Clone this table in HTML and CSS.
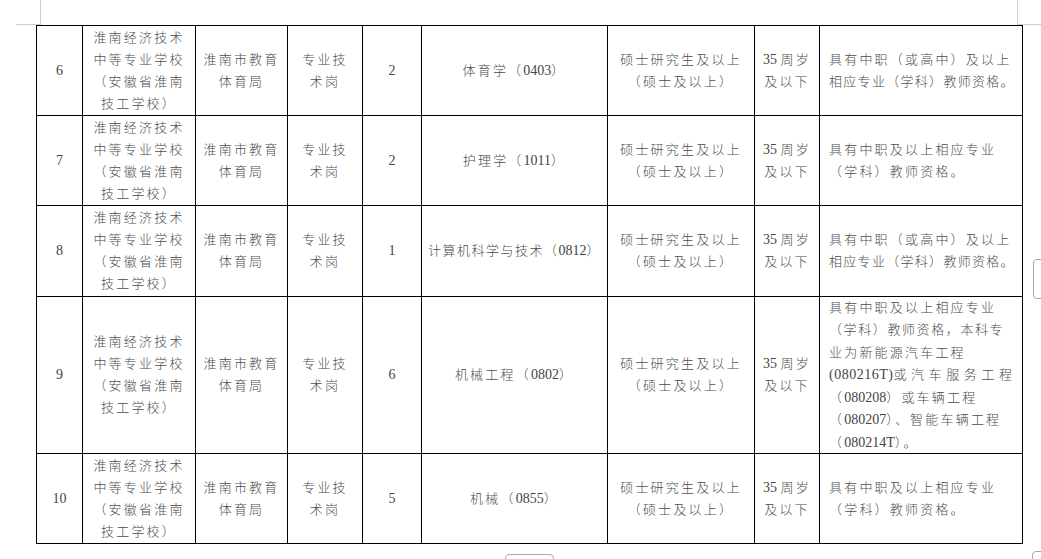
FILE: index.html
```html
<!DOCTYPE html>
<html lang="zh-CN">
<head>
<meta charset="utf-8">
<title>岗位表</title>
<link rel="stylesheet" href="styles.css">
</head>
<body>
<div class="page">
  <span class="mark mark-tl"></span>
  <span class="mark mark-tr"></span>
  <span class="tab tab-right"></span>
  <span class="tab tab-bottom"></span>
  <span class="tab tab-corner"></span>
  <table class="grid">
    <colgroup>
      <col class="w1"><col class="w2"><col class="w3"><col class="w4"><col class="w5">
      <col class="w6"><col class="w7"><col class="w8"><col class="w9">
    </colgroup>
    <tbody>
      <tr class="r90">
        <td><span class="n">6</span></td>
        <td>淮南经济技术<br>中等专业学校<br>（安徽省淮南<br>技工学校）</td>
        <td>淮南市教育<br>体育局</td>
        <td>专业技<br>术岗</td>
        <td><span class="n">2</span></td>
        <td>体育学（<span class="n">0403</span>）</td>
        <td>硕士研究生及以上<br>（硕士及以上）</td>
        <td><span class="n">35 </span>周岁<br>及以下</td>
        <td class="left">具有中职（或高中）及以上<br><span class="snug">相应专业（学科）教师资格。</span></td>
      </tr>
      <tr class="r90">
        <td><span class="n">7</span></td>
        <td>淮南经济技术<br>中等专业学校<br>（安徽省淮南<br>技工学校）</td>
        <td>淮南市教育<br>体育局</td>
        <td>专业技<br>术岗</td>
        <td><span class="n">2</span></td>
        <td>护理学（<span class="n">1011</span>）</td>
        <td>硕士研究生及以上<br>（硕士及以上）</td>
        <td><span class="n">35 </span>周岁<br>及以下</td>
        <td class="left">具有中职及以上相应专业<br>（学科）教师资格。</td>
      </tr>
      <tr class="r91">
        <td><span class="n">8</span></td>
        <td>淮南经济技术<br>中等专业学校<br>（安徽省淮南<br>技工学校）</td>
        <td>淮南市教育<br>体育局</td>
        <td>专业技<br>术岗</td>
        <td><span class="n">1</span></td>
        <td class="tight">计算机科学与技术（<span class="n">0812</span>）</td>
        <td>硕士研究生及以上<br>（硕士及以上）</td>
        <td><span class="n">35 </span>周岁<br>及以下</td>
        <td class="left">具有中职（或高中）及以上<br><span class="snug">相应专业（学科）教师资格。</span></td>
      </tr>
      <tr class="r157">
        <td><span class="n">9</span></td>
        <td>淮南经济技术<br>中等专业学校<br>（安徽省淮南<br>技工学校）</td>
        <td>淮南市教育<br>体育局</td>
        <td>专业技<br>术岗</td>
        <td><span class="n">6</span></td>
        <td>机械工程（<span class="n">0802</span>）</td>
        <td>硕士研究生及以上<br>（硕士及以上）</td>
        <td><span class="n">35 </span>周岁<br>及以下</td>
        <td class="left"><div class="long">具有中职及以上相应专业<br><span class="mid">（学科）教师资格，本科专</span><br>业为新能源汽车工程<br><span class="wide"><span class="n">(080216T)</span>或汽车服务工程</span><br>（<span class="n">080208</span>）或车辆工程<br>（<span class="n">080207</span>）、智能车辆工程<br>（<span class="n">080214T</span>）。</div></td>
      </tr>
      <tr class="r90">
        <td><span class="n">10</span></td>
        <td>淮南经济技术<br>中等专业学校<br>（安徽省淮南<br>技工学校）</td>
        <td>淮南市教育<br>体育局</td>
        <td>专业技<br>术岗</td>
        <td><span class="n">5</span></td>
        <td>机械（<span class="n">0855</span>）</td>
        <td>硕士研究生及以上<br>（硕士及以上）</td>
        <td><span class="n">35 </span>周岁<br>及以下</td>
        <td class="left">具有中职及以上相应专业<br>（学科）教师资格。</td>
      </tr>
    </tbody>
  </table>
</div>
</body>
</html>
```

FILE: styles.css
```css
html, body {
  margin: 0;
  background: #ffffff;
}

.page {
  position: relative;
  width: 1041px;
  height: 559px;
  box-sizing: border-box;
  padding: 25px 0 0 36px;
  overflow: hidden;
  font-family: "Liberation Serif", "Noto Sans CJK SC", serif;
}

.mark {
  position: absolute;
  top: 0;
  width: 24px;
  height: 24px;
  border-bottom: 1px solid #cfcfcf;
}

.mark-tl {
  left: 16px;
  border-right: 1px solid #cfcfcf;
}

.mark-tr {
  left: 1017px;
  border-left: 1px solid #cfcfcf;
}

.tab {
  position: absolute;
  border: 1px solid #a8a8a8;
  border-radius: 4px;
  background: #fff;
}

.tab-right {
  left: 1033px;
  top: 259px;
  width: 20px;
  height: 38px;
}

.tab-bottom {
  left: 505px;
  top: 554px;
  width: 47px;
  height: 20px;
}

.tab-corner {
  left: 1032px;
  top: 551px;
  width: 20px;
  height: 20px;
}

.grid {
  border-collapse: collapse;
  table-layout: fixed;
  width: 986px;
  font-size: 13px;
  line-height: 22px;
  color: #4d4d4d;
  font-weight: 300;
  letter-spacing: 2.2px;
}

.w1 { width: 46px; }
.w2 { width: 113px; }
.w3 { width: 92px; }
.w4 { width: 75px; }
.w5 { width: 59px; }
.w6 { width: 186px; }
.w7 { width: 147px; }
.w8 { width: 65px; }
.w9 { width: 203px; }

.r90 { height: 90px; }
.r91 { height: 91px; }
.r157 { height: 157px; }

.grid td {
  border: 1px solid #000000;
  padding: 0 1px;
  text-align: center;
  vertical-align: middle;
  white-space: nowrap;
  overflow: hidden;
}

.grid td.left {
  text-align: left;
  padding-left: 9px;
}

.long {
  line-height: 22.5px;
  margin: -1px 0 -2px;
}

.grid td.tight {
  letter-spacing: 1.5px;
}

.snug {
  letter-spacing: 1.3px;
}

.mid {
  letter-spacing: 1.6px;
}

.wide {
  letter-spacing: 4.6px;
}

.n {
  letter-spacing: 0;
  font-family: "Liberation Serif", serif;
  font-size: 14px;
  font-weight: 400;
  color: #444444;
}

.wide .n {
  letter-spacing: 0.5px;
}
```
